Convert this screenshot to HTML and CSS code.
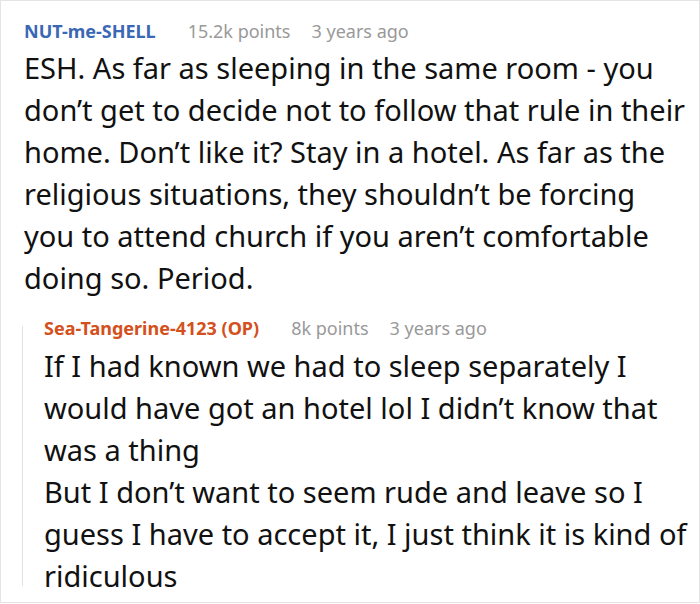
FILE: index.html
```html
<!DOCTYPE html>
<html>
<head>
<meta charset="utf-8">
<link rel="stylesheet" href="styles.css">
</head>
<body>
<div class="thread">
  <div class="comment">
    <div class="meta">
      <span class="author">NUT-me-SHELL</span>
      <span class="points">15.2k points</span>
      <span class="time">3 years ago</span>
    </div>
    <p class="body">ESH. As far as sleeping in the same room - you don’t get to decide not to follow that rule in their home. Don’t like it? Stay in a hotel. As far as the religious situations, they shouldn’t be forcing you to attend church if you aren’t comfortable doing so. Period.</p>
  </div>
  <div class="reply">
    <div class="meta">
      <span class="author op">Sea-Tangerine-4123 (OP)</span>
      <span class="points">8k points</span>
      <span class="time">3 years ago</span>
    </div>
    <p class="body">If I had known we had to sleep separately I would have got an hotel lol I didn’t know that was a thing<br>But I don’t want to seem rude and leave so I guess I have to accept it, I just think it is kind of ridiculous</p>
  </div>
</div>
</body>
</html>
```

FILE: styles.css
```css
html, body {
  margin: 0;
  padding: 0;
  background: #fff;
}
.thread {
  box-sizing: border-box;
  width: 700px;
  height: 603px;
  border: 1px solid #e4e4e4;
  padding: 18px 9px 0 23px;
  font-family: "Noto Sans", sans-serif;
  color: #111;
}
.meta {
  display: flex;
  align-items: center;
  height: 24px;
  font-size: 18px;
  line-height: 24px;
}
.author {
  font-weight: 700;
  color: #3a68b4;
  margin-right: 32px;
}
.author.op {
  color: #d4501c;
}
.points {
  color: #999;
  margin-right: 21px;
}
.time {
  color: #999;
}
.body {
  margin: 4px 0 0 0;
  font-size: 29px;
  line-height: 42px;
}
.reply {
  margin: 16.5px 0 0 -2px;
  position: relative;
  padding-left: 22px;
}
.reply::before {
  content: "";
  position: absolute;
  left: 0;
  top: 10px;
  height: 260px;
  width: 1px;
  background: #e2e2e2;
}
.reply .body {
  margin-top: 5px;
}
```
